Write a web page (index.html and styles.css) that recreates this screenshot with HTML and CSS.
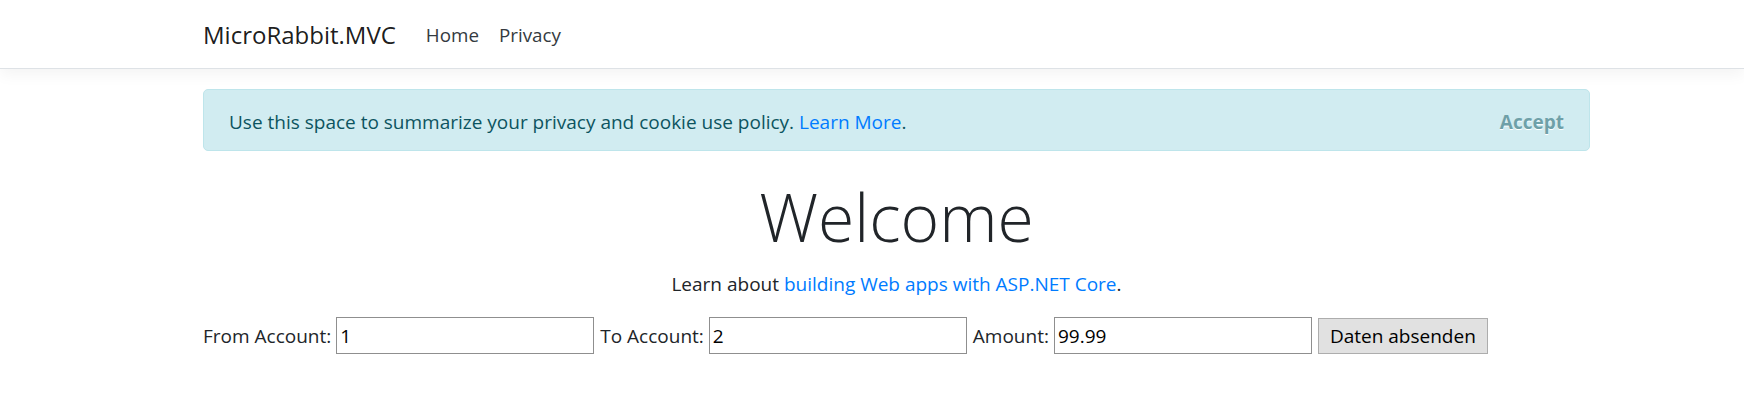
FILE: index.html
```html
<!DOCTYPE html>
<html lang="en">
<head>
<meta charset="utf-8">
<title>Home Page - MicroRabbit.MVC</title>
<link rel="stylesheet" href="styles.css">
</head>
<body>
<header>
  <nav class="navbar">
    <div class="container navbar-inner">
      <a class="navbar-brand" href="#">MicroRabbit.MVC</a>
      <ul class="navbar-nav">
        <li><a class="nav-link" href="#">Home</a></li>
        <li><a class="nav-link" href="#">Privacy</a></li>
      </ul>
    </div>
  </nav>
</header>
<div class="container">
  <div class="alert">
    <span class="alert-text">Use this space to summarize your privacy and cookie use policy. <a href="#">Learn More</a>.</span>
    <button type="button" class="accept-policy">Accept</button>
  </div>
  <main class="main">
    <div class="text-center">
      <h1 class="display-4">Welcome</h1>
      <p class="lead-text">Learn about <a href="#">building Web apps with ASP.NET Core</a>.</p>
    </div>
    <form class="transfer-form">
      <label class="field-label" for="from">From Account:</label>
      <input class="field-input" id="from" type="text" value="1">
      <label class="field-label" for="to">To Account:</label>
      <input class="field-input" id="to" type="text" value="2">
      <label class="field-label" for="amount">Amount:</label>
      <input class="field-input" id="amount" type="text" value="99.99">
      <button class="submit-btn" type="submit">Daten absenden</button>
    </form>
  </main>
</div>
</body>
</html>
```
FILE: styles.css
```css
* { box-sizing: border-box; }

html, body {
  margin: 0;
  padding: 0;
  background: #fff;
}

body {
  font-family: "Segoe UI", "Open Sans", "Noto Sans", sans-serif;
  font-size: 19px;
  line-height: 30px;
  color: #212529;
}

a {
  color: #007bff;
  text-decoration: none;
}

.container {
  width: 1387px;
  margin-left: 203px;
}

/* Navbar */
.navbar {
  background: #fff;
  border-bottom: 1px solid #dee2e6;
  box-shadow: 0 5px 15px rgba(0, 0, 0, 0.05);
  padding: 11px 0 9px 0;
  margin-bottom: 20px;
}

.navbar-inner {
  display: flex;
  align-items: center;
  height: 48px;
}

.navbar-brand {
  font-size: 24px;
  line-height: 48px;
  color: rgba(0, 0, 0, 0.9);
  margin-right: 20px;
}

.navbar-nav {
  display: flex;
  list-style: none;
  margin: 0;
  padding: 0;
}

.nav-link {
  display: block;
  padding: 0 10px;
  font-size: 18.8px;
  line-height: 48px;
  color: #343a40;
}

/* Alert */
.alert {
  display: flex;
  justify-content: space-between;
  align-items: center;
  padding: 17px 25px 13px 25px;
  background: #d1ecf1;
  border: 1px solid #bee5eb;
  border-radius: 5px;
  color: #0c5460;
  margin-bottom: 20px;
}

.accept-policy {
  font-family: inherit;
  font-size: 19px;
  line-height: 30px;
  font-weight: 700;
  color: #6ea0a8;
  background: transparent;
  border: 0;
  padding: 0;
  text-shadow: 0 1px 0 #fff;
}

/* Main */
.text-center {
  text-align: center;
}

.display-4 {
  font-size: 66px;
  font-weight: 300;
  line-height: 84px;
  margin: 0 0 11px 0;
  padding-top: 3px;
}

.lead-text {
  margin: 0 0 16px 0;
}

.transfer-form {
  display: flex;
  align-items: center;
  padding-top: 2px;
}

.field-label {
  margin-right: 5px;
}

.field-input {
  width: 258px;
  height: 37px;
  font-family: inherit;
  font-size: 19px;
  line-height: 30px;
  color: #000;
  padding: 1px 3px;
  border: 1px solid #8f8f8f;
  border-radius: 0;
  margin-right: 6px;
}

.submit-btn {
  height: 36px;
  font-family: inherit;
  font-size: 19px;
  line-height: 30px;
  color: #000;
  background: #e1e1e1;
  border: 1px solid #adadad;
  padding: 0 11px;
  border-radius: 0;
}
```
